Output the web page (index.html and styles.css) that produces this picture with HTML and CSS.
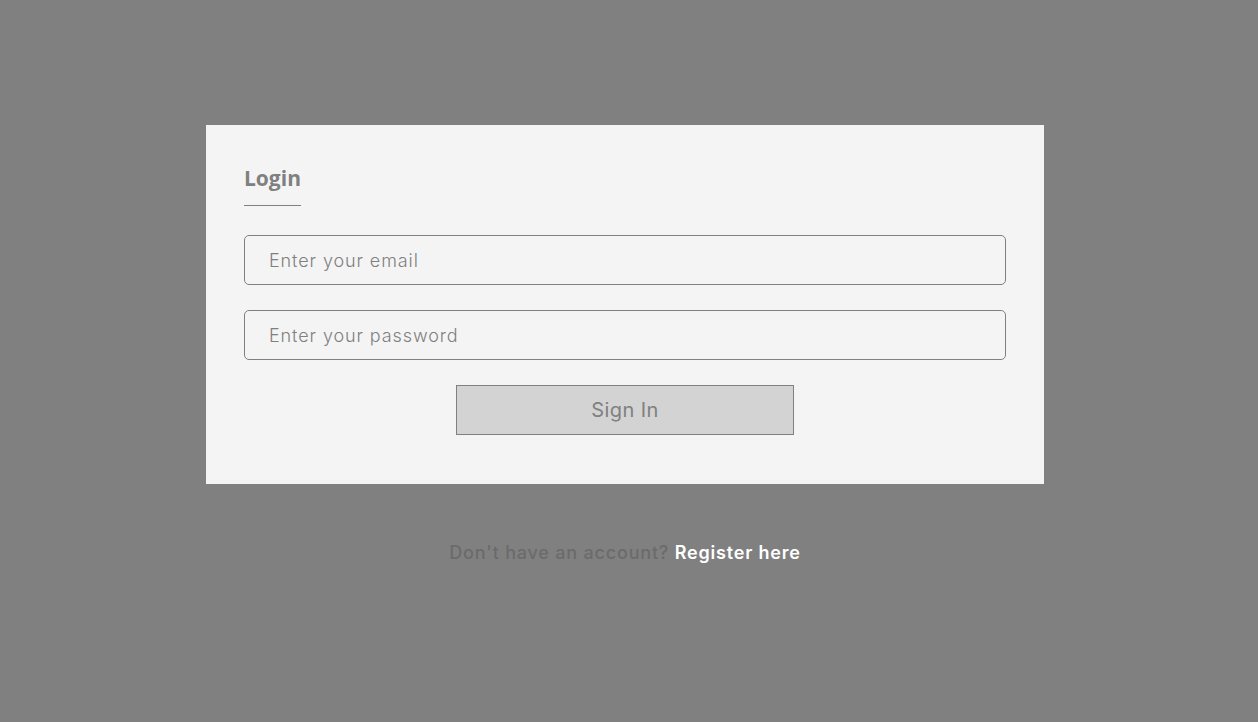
FILE: index.html
```html
<!DOCTYPE html>
<html lang="en">
<head>
<meta charset="utf-8">
<title>Login</title>
<link rel="stylesheet" href="styles.css">
</head>
<body>
<main class="page">
  <section class="card">
    <h2 class="title">Login</h2>
    <form class="form">
      <input class="field" type="email" placeholder="Enter your email">
      <input class="field" type="password" placeholder="Enter your password">
      <button class="btn" type="button">Sign In</button>
    </form>
  </section>
  <p class="footer">Don't have an account? <a class="link" href="#">Register here</a></p>
</main>
</body>
</html>
```

FILE: styles.css
```css
html, body {
  margin: 0;
  padding: 0;
  height: 100%;
  background: #808080;
}
body {
  font-family: "Inter", "Noto Sans", sans-serif;
  letter-spacing: 0.05em;
}
.page {
  width: 1250px;
  display: flex;
  flex-direction: column;
  align-items: center;
  padding-top: 125px;
}
.card {
  box-sizing: border-box;
  width: 838px;
  height: 359px;
  background: #f4f4f4;
  padding: 40px 38px 49px;
}
.title {
  display: inline-block;
  margin: 0;
  font-family: "Open Sans", sans-serif;
  font-weight: 700;
  font-size: 21px;
  line-height: 27px;
  letter-spacing: 0;
  color: #808080;
  padding-bottom: 13px;
  border-bottom: 1px solid #808080;
}
.form {
  display: flex;
  flex-direction: column;
  align-items: center;
  gap: 25px;
  margin-top: 29px;
}
.field {
  box-sizing: border-box;
  width: 100%;
  height: 50px;
  border: 1px solid #808080;
  border-radius: 5px;
  background: #f4f4f4;
  padding: 0 24px;
  font-family: inherit;
  letter-spacing: 0.05em;
  font-size: 18px;
  font-weight: 300;
  color: #808080;
  outline: none;
}
.field::placeholder {
  color: #808080;
  opacity: 1;
}
.btn {
  box-sizing: border-box;
  width: 338px;
  height: 50px;
  background: #d3d3d3;
  border: 1px solid #808080;
  border-radius: 0;
  font-family: inherit;
  letter-spacing: 0.02em;
  font-size: 20px;
  font-weight: 400;
  color: #808080;
}
.footer {
  margin: 58px 0 0;
  font-size: 18px;
  font-weight: 500;
  color: #6b6b6b;
}
.link {
  color: #ffffff;
  text-decoration: none;
  font-weight: 600;
}
```
